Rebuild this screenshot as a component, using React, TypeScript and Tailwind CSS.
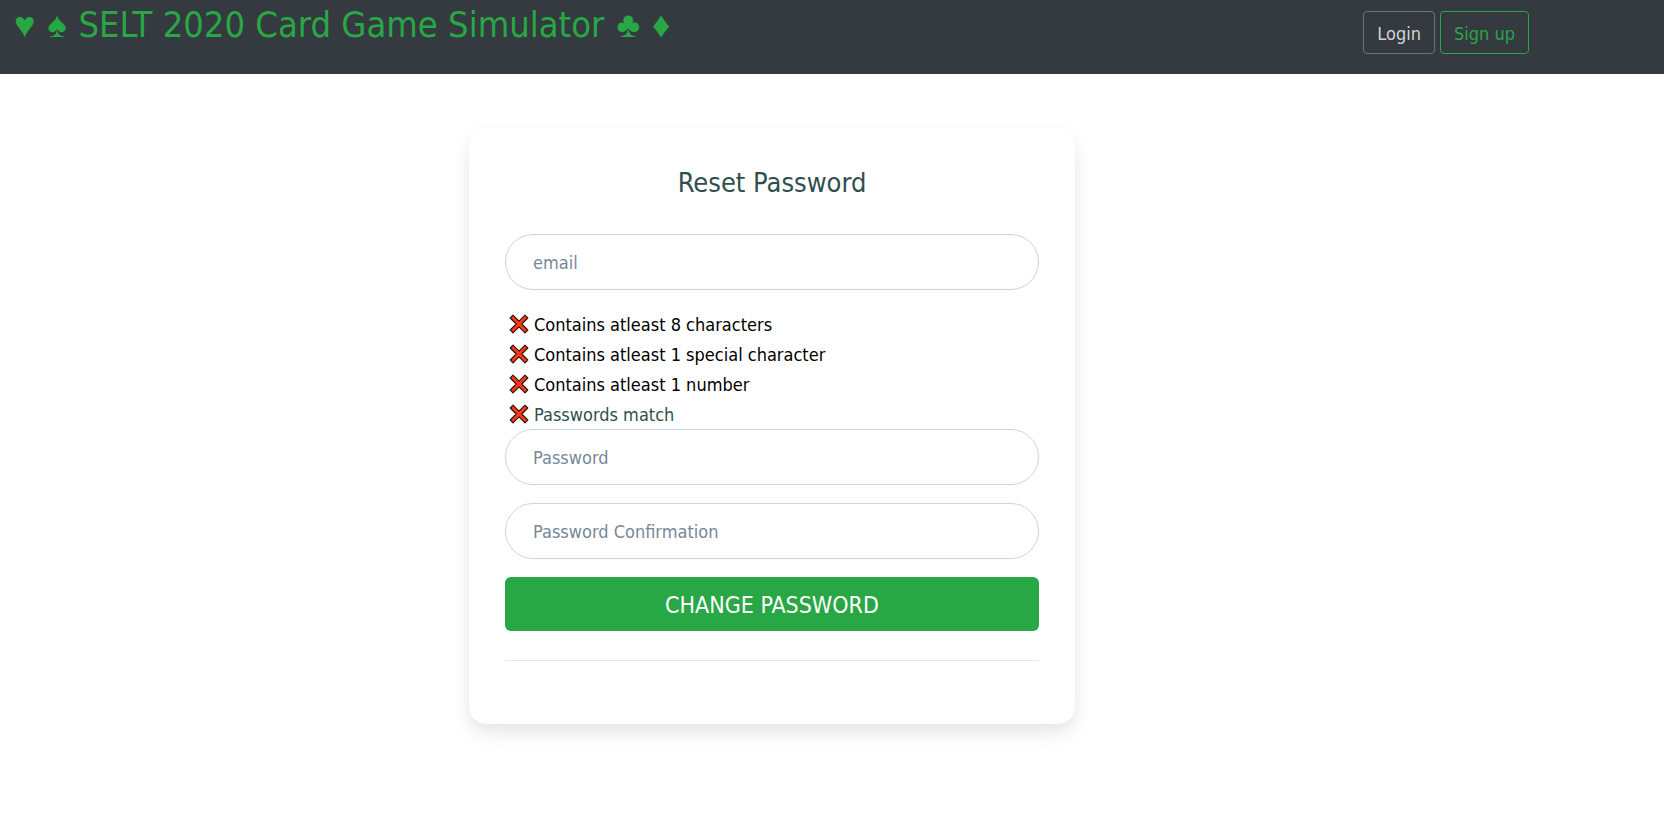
import React from "react";

const fieldClass =
  "block h-14 w-full rounded-full border border-[#ced4da] bg-white px-[27px] text-lg text-[#495057] outline-none placeholder:text-[#778899] focus:border-[#28a745]";

function CrossMark() {
  return (
    <svg viewBox="0 0 20 20" className="size-5 shrink-0" aria-hidden="true">
      <path
        d="M4 1.2 10 7.2l6-6 2.8 2.8L12.8 10l6 6-2.8 2.8-6-6-6 6L1.2 16l6-6-6-6Z"
        fill="#f7391a"
        stroke="#2a120c"
        strokeWidth="1.1"
        strokeLinejoin="round"
      />
    </svg>
  );
}

function Requirement({ text, muted = false }: { text: string; muted?: boolean }) {
  return (
    <li className={muted ? "flex h-[30px] items-center gap-[5px] text-[#2f4f4f]" : "flex h-[30px] items-center gap-[5px] text-black"}>
      <CrossMark />
      <span>{text}</span>
    </li>
  );
}

function Suit({ children }: { children: string }) {
  return <span className="font-['Liberation_Sans',sans-serif]">{children}</span>;
}

export default function App() {
  return (
    <div className="bg-white font-['DejaVu_Sans_Condensed','DejaVu_Sans',sans-serif] text-lg leading-[27px] text-[#2f4f4f]">
      <header className="flex h-[74px] items-start justify-between bg-[#343a40] pr-[135px] pl-[14px]">
        <h1 className="flex items-baseline gap-3 text-4xl leading-[50px] whitespace-nowrap text-[#28a745]">
          <Suit>♥</Suit>
          <Suit>♠</Suit>
          <span>SELT 2020 Card Game Simulator</span>
          <Suit>♣</Suit>
          <Suit>♦</Suit>
        </h1>
        <nav className="flex gap-[5px] pt-[11px]">
          <a href="#login" className="flex h-[43px] items-center rounded border border-[#6c757d] px-[13px] pt-[2px] text-[#d3d3d3]">
            Login
          </a>
          <a href="#signup" className="flex h-[43px] items-center rounded border border-[#28a745] px-[13px] pt-[2px] text-[#28a745]">
            Sign up
          </a>
        </nav>
      </header>

      <main className="flex justify-center pt-[54px] pr-[120px] pb-16">
        <section className="w-full max-w-[606px] rounded-[18px] bg-white px-9 pt-[38px] pb-[63px] shadow-[0_9px_18px_0_rgba(0,0,0,0.1)]">
          <h2 className="mb-[34px] text-center text-[27px] leading-[34px]">Reset Password</h2>
          <form>
            <input type="email" placeholder="email" aria-label="email" className={fieldClass} />
            <ul className="mt-[19px] pl-1">
              <Requirement text="Contains atleast 8 characters" />
              <Requirement text="Contains atleast 1 special character" />
              <Requirement text="Contains atleast 1 number" />
              <Requirement text="Passwords match" muted />
            </ul>
            <div className="flex flex-col gap-[18px]">
              <input type="password" placeholder="Password" aria-label="Password" className={fieldClass} />
              <input type="password" placeholder="Password Confirmation" aria-label="Password Confirmation" className={fieldClass} />
              <button type="button" className="h-[54px] w-full rounded-md bg-[#28a745] pt-[2px] text-[23px] text-white uppercase">
                Change Password
              </button>
            </div>
          </form>
          <hr className="mt-[29px] border-t border-black/10" />
        </section>
      </main>
    </div>
  );
}
